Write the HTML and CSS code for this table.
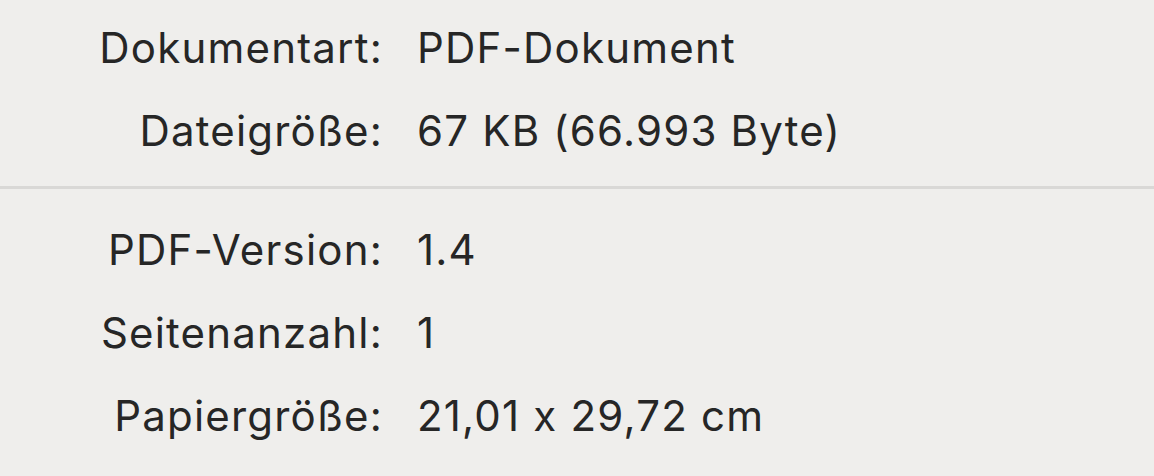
FILE: index.html
```html
<!DOCTYPE html>
<html lang="de">
<head>
    <meta charset="UTF-8">
    <meta name="viewport" content="width=device-width, initial-scale=1.0">
    <title>Informationen</title>
    <link rel="stylesheet" href="styles.css">
</head>
<body>
    <div class="panel">
        <!-- Allgemein -->
        <dl class="info-group first">
            <dt>Dokumentart:</dt>
            <dd>PDF-Dokument</dd>
            <dt>Dateigröße:</dt>
            <dd>67 KB (66.993 Byte)</dd>
        </dl>

        <div class="divider"></div>

        <!-- PDF-Details -->
        <dl class="info-group">
            <dt>PDF-Version:</dt>
            <dd>1.4</dd>
            <dt>Seitenanzahl:</dt>
            <dd>1</dd>
            <dt>Papiergröße:</dt>
            <dd>21,01 x 29,72 cm</dd>
        </dl>
    </div>
</body>
</html>
```

FILE: styles.css
```css
body {
    margin: 0;
    padding: 0;
    background: #efeeec;
    font-family: Inter, "Noto Sans", sans-serif;
    font-feature-settings: "calt" 0;
    color: #262626;
}
.panel {
    width: 1154px;
    height: 476px;
    overflow: hidden;
}
.info-group {
    display: grid;
    grid-template-columns: 383px auto;
    column-gap: 34px;
    margin: 0;
    font-size: 42px;
    letter-spacing: 1.2px;
    line-height: 83px;
}
.info-group.first {
    padding-top: 6px;
}
.info-group dt {
    text-align: right;
}
.info-group dd {
    margin: 0;
}
.divider {
    height: 3px;
    background: #d9d8d6;
    margin: 14px 0 19px;
}
```
